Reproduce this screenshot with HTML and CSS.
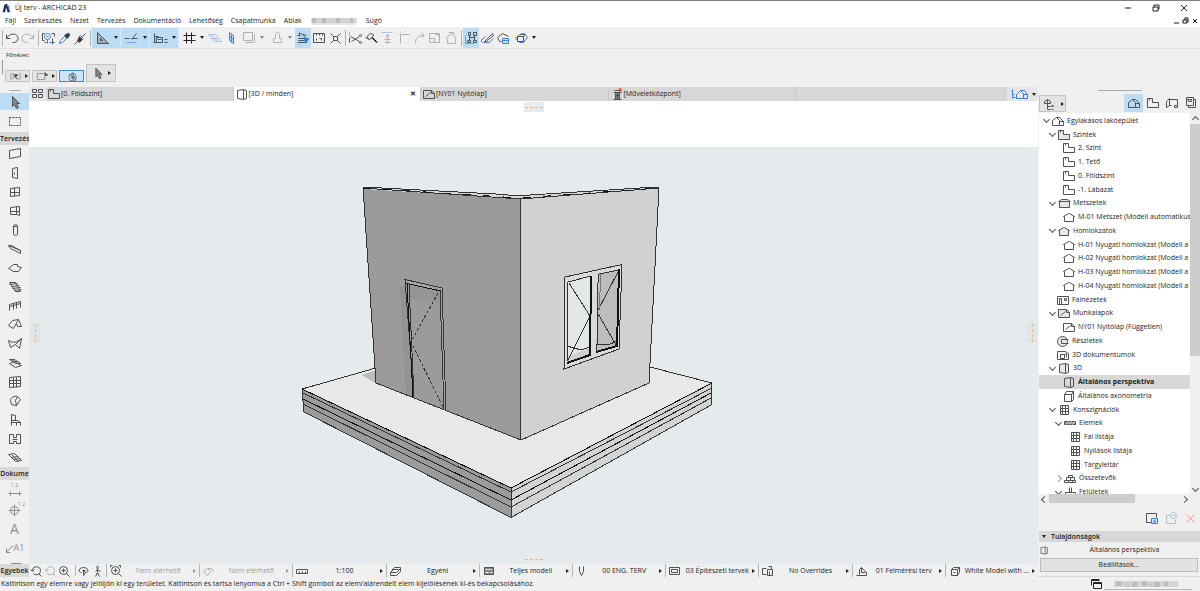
FILE: index.html
```html
<!DOCTYPE html>
<html lang="hu">
<head>
    <meta charset="UTF-8">
    <title>Új terv - ARCHICAD 23</title>
    <link rel="stylesheet" href="styles.css">
</head>
<body>
    <svg class="sprite" aria-hidden="true">
        <!-- toolbar -->
        <symbol id="undo" viewBox="0 0 16 16"><path d="M2 4v4h4M2 8c2-4 6-5 9-4 4 2 3 7-1 8H8"/></symbol>
        <symbol id="redo" viewBox="0 0 16 16"><path d="M13 4v4H9M13 8c-2-4-6-5-9-4-4 2-3 7 1 8h2"/></symbol>
        <symbol id="find" viewBox="0 0 16 16"><path d="M2 3h2M2 3v7h2M11 3h3v3M12 8v4h2M4 12h2"/><circle class="bl" cx="7" cy="6" r="3"/><path class="bl" d="M7 9v4M9 12h3v2M6 6h2"/></symbol>
        <symbol id="dropper" viewBox="0 0 16 16"><path class="bl" d="M3 13l1-3 4-4 2 2-4 4z"/><path class="dk" d="M8 5l3 3 2-3c1-1-1-3-2-2z"/></symbol>
        <symbol id="inject" viewBox="0 0 16 16"><path d="M2 14l5-5M8 5l3 3M10 6l3-3"/><path class="dk" d="M7 6l3 3-3 3-2-2z"/></symbol>
        <symbol id="triangle" viewBox="0 0 16 16"><path class="gl" d="M3 2v11h11zM6 8v2h2z"/></symbol>
        <symbol id="snap" viewBox="0 0 16 16"><path d="M1 8h5M8 9l5-6M8 8h6"/><path class="bl thin" d="M3 12h10"/></symbol>
        <symbol id="tracker" viewBox="0 0 16 16"><path d="M2 3v9M2 6h4M1 12h3M4 7h6v5H4zM5 9h4M12 9h3M12 12h3"/></symbol>
        <symbol id="hash" viewBox="0 0 16 16"><path class="bold" d="M5 2v11M10 2v11M2 5h12M2 10h12"/></symbol>
        <symbol id="plane" viewBox="0 0 16 16"><path class="bl" d="M1 4h7l6 7H7zM4 4l6 7M4 8h7"/></symbol>
        <symbol id="wallplane" viewBox="0 0 16 16"><path class="blf" d="M6 2l4 3v8l-4-3z"/><path class="bl" d="M6 6l4 3M8 4v8"/></symbol>
        <symbol id="layersq" viewBox="0 0 16 16"><path d="M2 2h9v8H2zM4 12h9V4"/></symbol>
        <symbol id="lock" viewBox="0 0 16 16"><path d="M4 12V8h2V4c0-3 4-3 4 0v4h2v4z"/></symbol>
        <symbol id="trace" viewBox="0 0 16 16"><path d="M4 2v3M2 5h3M5 3l6 2M3 8h7L8 5M2 12h9l-2-2H3"/><path class="bls" d="M10 7l4 1-3 4-3-2z"/></symbol>
        <symbol id="ruler" viewBox="0 0 16 16"><path d="M2 12V3h11v9zM5 3v2M8 3v2M11 3v2M5 8v2M8 8h2v2"/></symbol>
        <symbol id="explode" viewBox="0 0 16 16"><path d="M6 6h4v4H6zM3 3l3 3M13 3l-3 3M3 13l3-3M13 13l-3-3"/></symbol>
        <symbol id="scissors" viewBox="0 0 16 16"><path class="bl thin" d="M2 2v3"/><path d="M2 7v5M3 6l9 5M4 11l8-5"/><circle cx="13" cy="5" r="1"/><circle cx="13" cy="12" r="1"/></symbol>
        <symbol id="adjust" viewBox="0 0 16 16"><path class="bold" d="M8 7l5 5M9 7l5 5"/><path d="M4 7c0-3 3-5 6-3l-1 3-3 2zM2 7l4 2"/></symbol>
        <symbol id="split" viewBox="0 0 16 16"><path class="bl" d="M2 2h11"/><path d="M8 4v9M6 6l2-2 2 2M5 9h6M5 12h6"/></symbol>
        <symbol id="corner" viewBox="0 0 16 16"><path d="M5 13V4h9M2 4h1M5 1v1"/></symbol>
        <symbol id="fillet" viewBox="0 0 16 16"><path d="M4 13c0-6 3-8 8-8M10 2l3 3-3 2"/></symbol>
        <symbol id="resize" viewBox="0 0 16 16"><path d="M2 3h10v9H2zM2 8h5v4M8 4h3v2"/></symbol>
        <symbol id="roofcut" viewBox="0 0 16 16"><path d="M2 8l6-5 5 5M4 8v5h8V8M5 2h5v2"/></symbol>
        <symbol id="group" viewBox="0 0 16 16"><path d="M5 2h2v3H5zM10 2h3v3h-3zM6 5v5M11 5v5M4 10h3v2H4zM10 10h3v2h-3zM6 7h5"/><path class="bl thin" d="M2 5v8h9"/></symbol>
        <symbol id="pen" viewBox="0 0 16 16"><path d="M5 11l8-8 1 2-7 6z"/><path class="bl" d="M3 8c-3 3 0 5 3 4h4l4-4M6 6L3 9"/></symbol>
        <symbol id="hexlabel" viewBox="0 0 16 16"><path d="M6 11H4L2 7l5-4 6 3"/><path class="blf" d="M7 8h6v5H7z"/><path class="bl" d="M7 10h6"/></symbol>
        <symbol id="cube" viewBox="0 0 16 16"><path class="bl" d="M2 8l4-4 5-1 3 4-4 5-4 0z"/><path d="M4 6h6v5H4zM10 6l2-2M6 4h5"/></symbol>
        <!-- pointers -->
        <symbol id="arrow" viewBox="0 0 16 16"><path class="gf" d="M5 2v10l2-2 2 4 2-1-2-4h3z"/></symbol>
        <symbol id="marquee" viewBox="0 0 16 16"><path class="dash" d="M2 4h11v8H2z"/></symbol>
        <symbol id="marqset" viewBox="0 0 16 16"><path class="dash" d="M1 4h10v8H1z"/><path class="dk" d="M11 3l4 3-3 1z"/></symbol>
        <symbol id="suspend" viewBox="0 0 16 16"><path class="dash" d="M2 4v8M14 4v8"/><path d="M4 11l6-6M5 6l5 5M4 5h2M9 11h3"/><path class="dk" d="M7 5l4 1-3 3z"/></symbol>
        <symbol id="orbit" viewBox="0 0 16 16"><circle cx="8" cy="9" r="5"/><path d="M4 7l5-4v4l-3 2 3 3 3-2"/><path class="gf" d="M7 7l4 2-3 2z"/></symbol>
        <!-- toolbox -->
        <symbol id="t-wall" viewBox="0 0 16 16"><path d="M2 4l11-2v8L2 12z"/></symbol>
        <symbol id="t-door" viewBox="0 0 16 16"><path d="M5 3l5-1v11l-5-1zM7 7v2"/></symbol>
        <symbol id="t-window" viewBox="0 0 16 16"><path d="M3 4l9-1v8l-9 1zM7 3v9M3 8h9"/></symbol>
        <symbol id="t-corner" viewBox="0 0 16 16"><path d="M3 4l9-1v9l-3-1H3zM9 3v8M3 8h9"/></symbol>
        <symbol id="t-column" viewBox="0 0 16 16"><path d="M6 3c0-1 4-1 4 0v9c0 1-4 1-4 0zM6 4h4"/></symbol>
        <symbol id="t-beam" viewBox="0 0 16 16"><path d="M1 4l12 5v3L3 7zM1 4h3l9 5"/></symbol>
        <symbol id="t-slab" viewBox="0 0 16 16"><path d="M1 8l5-4h4v2l4 1-3 4H6z"/></symbol>
        <symbol id="t-stair" viewBox="0 0 16 16"><path d="M2 3h6l5 9H8zM2 5l8-1M4 7l8-1M5 9l8-1M7 11l7-1"/></symbol>
        <symbol id="t-rail" viewBox="0 0 16 16"><path d="M2 12V6l11-3v6M2 8l11-3M6 5v6M9 4v6"/></symbol>
        <symbol id="t-roof" viewBox="0 0 16 16"><path d="M1 8l4-5 6-1-5 9zM11 2l3 7h-4L9 6"/></symbol>
        <symbol id="t-shell" viewBox="0 0 16 16"><path d="M1 4c5 3 8 2 13-2l-2 10-4-4-5 3zM8 8l6-6"/></symbol>
        <symbol id="t-sky" viewBox="0 0 16 16"><path d="M2 4h5l6 4H8zM2 8l3-1M2 8l6 4 6-2-3-1M4 4l6 4M5 6h6"/></symbol>
        <symbol id="t-curtain" viewBox="0 0 16 16"><path d="M2 3l11-1v10L2 13zM6 3v10M9 3v10M2 6h11M2 9h11"/></symbol>
        <symbol id="t-morph" viewBox="0 0 16 16"><path d="M3 7c0-3 4-5 7-4l3 3-4 6-5-1zM10 3L8 7l1 5"/></symbol>
        <symbol id="t-object" viewBox="0 0 16 16"><path d="M4 2v11M4 8h6l3 2v3M4 10h5v3M4 2l4 1v5M9 10h4"/></symbol>
        <symbol id="t-zone" viewBox="0 0 16 16"><path d="M2 3h4v3h3V3h4v9h-4v-2H6v2H2zM5 8h5"/></symbol>
        <symbol id="t-mesh" viewBox="0 0 16 16"><path d="M1 4l6-1 7 7-6 1zM4 7l7-1M6 9l7-1M4 4l7 7"/></symbol>
        <symbol id="t-dim" viewBox="0 0 16 16"><path d="M1 10h13M3 8v4M12 8v4"/></symbol>
        <symbol id="t-level" viewBox="0 0 16 16"><circle cx="7" cy="8" r="4"/><path d="M1 8h12M7 2v12"/></symbol>
        <symbol id="t-label" viewBox="0 0 9 12"><path d="M1 10l5-6h2M1 6v4h4"/></symbol>
        <symbol id="t-fill" viewBox="0 0 16 16"><path d="M4 4h10l-3 8H2zM6 4L4 9M9 4L7 9M12 4l-2 5"/></symbol>
        <!-- views -->
        <symbol id="grid4" viewBox="0 0 14 14"><path d="M1 2h4v3H1zM7 2h4v3H7zM1 7h4v3H1zM7 7h4v3H7z"/></symbol>
        <symbol id="house" viewBox="0 0 14 14"><path d="M1 11V6l4-3 3 3v5zM5 3h3l4 4v4H8M8 7h4"/></symbol>
        <symbol id="story" viewBox="0 0 14 14"><path d="M1 2h5v4h6v5H1zM3 2v2"/></symbol>
        <symbol id="section" viewBox="0 0 14 14"><path d="M2 11V5h10v6zM1 5l3-2h6l3 2"/></symbol>
        <symbol id="elev" viewBox="0 0 14 14"><path d="M2 11V6H1l5-3h1l5 3h-1v5z"/></symbol>
        <symbol id="interior" viewBox="0 0 14 14"><path d="M1 3h11v8H1zM3 5v6M5 5v6M3 5h2M8 5h2v2H8z"/></symbol>
        <symbol id="sheet" viewBox="0 0 14 14"><path d="M1 3h8l3 3v5H1zM9 3v3h3M3 9l5-4"/></symbol>
        <symbol id="detail" viewBox="0 0 14 14"><circle cx="6" cy="7" r="5"/><path d="M5 5v4M5 5h7M5 9h7"/></symbol>
        <symbol id="doc3d" viewBox="0 0 14 14"><path d="M1 3h8l3 2v6H1zM4 6h4v4H4zM8 6l2-1v4"/></symbol>
        <symbol id="persp" viewBox="0 0 14 14"><path d="M2 3l6-1v10l-6-1zM8 2l3 1v8l-3 1"/></symbol>
        <symbol id="axo" viewBox="0 0 14 14"><path d="M2 5h7v7H2zM2 5l2-3h7L9 5M11 2v8l-2 2"/></symbol>
        <symbol id="table" viewBox="0 0 14 14"><path d="M3 2h8v9H3zM3 5h8M3 8h8M5 2v9M8 2v9"/></symbol>
        <symbol id="hatch" viewBox="0 0 14 14"><path class="gf" d="M1 5h11v3H1z"/><path class="wh" d="M3 8l2-3M6 8l2-3M9 8l2-3"/></symbol>
        <symbol id="bricks" viewBox="0 0 14 14"><path d="M1 9h11v2H1zM3 6h8v3H3zM5 4h4v2H5zM5 9v2M9 9v2M7 6v3"/></symbol>
        <symbol id="surface" viewBox="0 0 14 14"><path d="M6 2v5M8 2v5M2 7h10v3H2zM4 10v2M10 10v2"/></symbol>
        <symbol id="layout" viewBox="0 0 14 14"><path d="M1 11V5l3-3v7zM4 3h8v6M6 9H4M9 9h3v2H9z"/></symbol>
        <symbol id="publish" viewBox="0 0 14 14"><path d="M2 1h7v8H2zM4 9v2h7V3H9M4 3h3v2H4zM2 3h2"/></symbol>
        <symbol id="treemode" viewBox="0 0 14 14"><path d="M2 6V4l3-2 3 2v2H2M5 2v10h3M5 9h3M9 8h2M9 9h2M9 12h2"/></symbol>
        <symbol id="tower" viewBox="0 0 14 14"><path class="gf" d="M5 5h4v7H5z"/><path d="M3 12h8M3 5h8M5 8h4M4 3h6M7 5v7"/><path class="red" d="M8 1l3 0v3h-2z"/></symbol>
        <symbol id="housemenu" viewBox="0 0 20 14"><path d="M3 2v9M2 4h1M3 7h2M3 10h3M7 11V7l4-4 3 3v5zM11 3l4 0 3 4v4h-4M14 7h4"/></symbol>
        <symbol id="newview" viewBox="0 0 14 14"><path d="M6 11H1V2h10v4"/><path class="blf" d="M6 7h6v5H6z"/><path class="bls" d="M8 9h2v2H8z"/></symbol>
        <symbol id="newfolder" viewBox="0 0 14 14"><path d="M6 4H2v8h9V8"/><circle cx="9" cy="4" r="3"/><path d="M8 4h3"/></symbol>
        <symbol id="cross" viewBox="0 0 14 14"><path d="M3 3l8 8M11 3l-8 8"/></symbol>
        <!-- quick options -->
        <symbol id="zoomback" viewBox="0 0 14 14"><path d="M3 6c0-5 8-5 8 0s-6 5-7 3M1 5l2 2 2-2M9 9l3 3"/></symbol>
        <symbol id="zoomin" viewBox="0 0 14 14"><circle cx="6" cy="6" r="4"/><path d="M9 9l3 3M4 6h4M6 4v4"/></symbol>
        <symbol id="spin" viewBox="0 0 14 14"><path d="M4 8C0 8 1 3 6 3s6 5 2 5M5 6h3M6 6v5l2-3z"/></symbol>
        <symbol id="walk" viewBox="0 0 14 14"><circle cx="6" cy="3" r="1"/><path d="M6 5v3l-2 4M6 8l2 4M4 7l2-2 3 2"/></symbol>
        <symbol id="fit" viewBox="0 0 14 14"><circle cx="6" cy="6" r="4"/><path d="M4 6h4M6 4v4M1 3V1h2M9 1h2v2M9 9l3 3"/></symbol>
        <symbol id="turn" viewBox="0 0 14 14"><path d="M1 7l4-3 3 3-3 4zM5 4h4l2 3"/></symbol>
        <symbol id="scale" viewBox="0 0 14 14"><path d="M1 5h11v4H1zM4 7v2M7 7v2M10 7v2"/></symbol>
        <symbol id="layers" viewBox="0 0 14 14"><path d="M1 8h6l4-4M1 8l3-3M1 8v3h6l4-4V3H5L2 6M3 5h6"/></symbol>
        <symbol id="partial" viewBox="0 0 14 14"><path class="gf" d="M2 3h9v7H2z"/><path class="wh" d="M3 5h2M6 5h2M9 5h1M3 8h3M8 8h2"/></symbol>
        <symbol id="nib" viewBox="0 0 14 14"><path d="M4 2v5l2 4 2-4V2"/></symbol>
        <symbol id="frame" viewBox="0 0 14 14"><path d="M1 3h10v7H1zM3 5h6v3H3z"/></symbol>
        <symbol id="override" viewBox="0 0 14 14"><path d="M5 10H1V4h4M6 5h5v6H6zM7 2h3v3M8 7v4"/></symbol>
        <symbol id="reno" viewBox="0 0 14 14"><path d="M1 11h10V8L6 3 4 5v5M6 3v5h4"/></symbol>
        <symbol id="style3d" viewBox="0 0 14 14"><path d="M3 5h6v6H3zM3 5l2-2h6L9 5M11 3v5l-2 3M5 8h2"/></symbol>
        <symbol id="windows" viewBox="0 0 14 14"><path d="M2 8V2h8M4 5h8v6H4zM4 6h8M2 3h8"/></symbol>
    </svg>

    <header class="title-bar">
        <svg class="logo" viewBox="0 0 12 12"><path d="M2 11L4 2l3-1 4 10H8L6 5l-1 6z"/><path class="logo-light" d="M7 1l3 3 1 7-2-4z"/></svg>
        <h1>Új terv - ARCHICAD 23</h1>
        <div class="win-buttons">
            <button><svg viewBox="0 0 10 10"><path d="M2 5h6"/></svg></button>
            <button><svg viewBox="0 0 10 10"><path d="M2 4h5v4H2zM3 4V2h5v4H7"/></svg></button>
            <button><svg viewBox="0 0 10 10"><path d="M2 2l6 6M8 2L2 8"/></svg></button>
        </div>
    </header>

    <nav class="menu">
        <a href="#">Fájl</a>
        <a href="#">Szerkesztés</a>
        <a href="#">Nézet</a>
        <a href="#">Tervezés</a>
        <a href="#">Dokumentáció</a>
        <a href="#">Lehetőség</a>
        <a href="#">Csapatmunka</a>
        <a href="#">Ablak</a>
        <svg class="masked" viewBox="0 0 45 8"><path fill="#bbb" d="M0 1h5v5H0zM10 1h5v5h-5zM24 1h5v5h-5zM38 1h4v5h-4z"/><path fill="#d2d2d2" d="M5 1h5v5H5zM15 1h9v5h-9zM29 1h9v5h-9zM42 1h3v5h-3z"/><path fill="#e6e6e6" d="M0 6h45v2H0z"/></svg>
        <a href="#">Súgó</a>
        <div class="doc-buttons">
            <button><svg viewBox="0 0 8 8"><path d="M1 6h5"/></svg></button>
            <button><svg viewBox="0 0 8 8"><path d="M1 3h4v3H1zM3 3V1h3v4H5"/></svg></button>
            <button><svg viewBox="0 0 8 8"><path d="M2 2l4 4M6 2L2 6"/></svg></button>
        </div>
    </nav>

    <div class="toolbar">
        <i class="sep"></i>
        <button class="tool"><svg><use href="#undo"/></svg></button>
        <button class="tool off"><svg><use href="#redo"/></svg></button>
        <i class="sep"></i>
        <button class="tool"><svg><use href="#find"/></svg></button>
        <button class="tool"><svg><use href="#dropper"/></svg></button>
        <button class="tool"><svg><use href="#inject"/></svg></button>
        <i class="sep"></i>
        <div class="pair on"><button class="tool"><svg><use href="#triangle"/></svg></button><button class="drop"></button></div>
        <div class="pair on"><button class="tool"><svg><use href="#snap"/></svg></button><button class="drop"></button></div>
        <div class="pair on"><button class="tool"><svg><use href="#tracker"/></svg></button><button class="drop"></button></div>
        <div class="pair"><button class="tool"><svg><use href="#hash"/></svg></button><button class="drop"></button></div>
        <button class="tool off"><svg><use href="#plane"/></svg></button>
        <button class="tool"><svg><use href="#wallplane"/></svg></button>
        <div class="pair off"><button class="tool"><svg><use href="#layersq"/></svg></button><button class="drop"></button></div>
        <div class="pair off"><button class="tool"><svg><use href="#lock"/></svg></button><button class="drop"></button></div>
        <button class="tool on"><svg><use href="#trace"/></svg></button>
        <button class="tool"><svg><use href="#ruler"/></svg></button>
        <button class="tool"><svg><use href="#explode"/></svg></button>
        <i class="sep"></i>
        <button class="tool"><svg><use href="#scissors"/></svg></button>
        <button class="tool"><svg><use href="#adjust"/></svg></button>
        <button class="tool off"><svg><use href="#split"/></svg></button>
        <button class="tool off"><svg><use href="#corner"/></svg></button>
        <button class="tool off"><svg><use href="#fillet"/></svg></button>
        <button class="tool off"><svg><use href="#resize"/></svg></button>
        <button class="tool off"><svg><use href="#roofcut"/></svg></button>
        <i class="sep"></i>
        <button class="tool on"><svg><use href="#group"/></svg></button>
        <button class="tool"><svg><use href="#pen"/></svg></button>
        <button class="tool"><svg><use href="#hexlabel"/></svg></button>
        <div class="pair"><button class="tool"><svg><use href="#cube"/></svg></button><button class="drop"></button></div>
    </div>

    <div class="info-box">
        <span class="info-label">Főnézet:</span>
        <div class="info-row">
            <button class="mode"><svg><use href="#suspend"/></svg><i class="tri"></i></button>
            <button class="mode"><svg><use href="#marqset"/></svg><i class="tri"></i></button>
            <button class="mode active"><svg><use href="#orbit"/></svg></button>
            <button class="mode big"><svg><use href="#arrow"/></svg><i class="tri"></i></button>
        </div>
    </div>

    <main class="work">
        <aside class="toolbox">
            <div class="grip"></div>
            <button class="t-arrow on"><svg><use href="#arrow"/></svg></button>
            <button class="t-marquee"><svg><use href="#marquee"/></svg></button>
            <h2>Tervezés</h2>
            <div class="design">
                <button><svg><use href="#t-wall"/></svg></button>
                <button><svg><use href="#t-door"/></svg></button>
                <button><svg><use href="#t-window"/></svg></button>
                <button><svg><use href="#t-corner"/></svg></button>
                <button><svg><use href="#t-column"/></svg></button>
                <button><svg><use href="#t-beam"/></svg></button>
                <button><svg><use href="#t-slab"/></svg></button>
                <button><svg><use href="#t-stair"/></svg></button>
                <button><svg><use href="#t-rail"/></svg></button>
                <button><svg><use href="#t-roof"/></svg></button>
                <button><svg><use href="#t-shell"/></svg></button>
                <button><svg><use href="#t-sky"/></svg></button>
                <button><svg><use href="#t-curtain"/></svg></button>
                <button><svg><use href="#t-morph"/></svg></button>
                <button><svg><use href="#t-object"/></svg></button>
                <button><svg><use href="#t-zone"/></svg></button>
                <button><svg><use href="#t-mesh"/></svg></button>
            </div>
            <h2>Dokume</h2>
            <div class="document">
                <button class="dim"><span>1.2</span><svg><use href="#t-dim"/></svg></button>
                <button class="level"><span>1.2</span><svg><use href="#t-level"/></svg></button>
                <button class="letter">A</button>
                <button class="note"><svg><use href="#t-label"/></svg>A1</button>
                <button><svg><use href="#t-fill"/></svg></button>
            </div>
            <h2>Egyebek</h2>
        </aside>

        <section class="center">
            <div class="tabs">
                <button class="tab-grid"><svg><use href="#grid4"/></svg></button>
                <a href="#" class="tab"><svg><use href="#story"/></svg>[0. Földszint]</a>
                <a href="#" class="tab current"><svg><use href="#persp"/></svg>[3D / minden]<b>✕</b></a>
                <a href="#" class="tab"><svg><use href="#sheet"/></svg>[NY01 Nyitólap]</a>
                <a href="#" class="tab"><svg><use href="#tower"/></svg>[Műveletközpont]</a>
                <div class="tab-rest"></div>
                <button class="tab-menu"><svg><use href="#housemenu"/></svg><i class="down"></i></button>
            </div>

            <div class="view">
                <svg class="model" viewBox="29 101 1009 463">
                    <!-- slab -->
                    <path fill="#9b9b9b" d="M302 389L511 488V517L304 412z"/>
                    <path fill="#d3d3d3" d="M511 488L712 383L711 405L511 517z"/>
                    <path fill="#e8e8e8" d="M302 389L376 368L650 367L712 383L511 488z"/>
                    <path fill="#bcbcbc" d="M361 375L376 370V383z"/>
                    <path class="edge" d="M376 368L302 389L511 488L712 383L650 367M302 389L304 412L511 517.500L711 405L712 383M511 488V517"/>
                    <path class="edge" d="M303 393L511 492L712 388M303 404L511 507L711 398"/>
                    <path class="edge heavy" d="M303 399L511 500L711 393M302 389L511 488L712 383"/>
                    <!-- walls -->
                    <path fill="#9b9b9b" d="M363 188L520 198L521 440L376 383z"/>
                    <path fill="#d1d1d1" d="M520 198L659 188L649 383L521 440z"/>
                    <path fill="#d8d8d8" d="M363 187L505 195H530L659 187V189L520 199L363 189z"/>
                    <path class="edge" d="M363 187L376 383L521 440L649 383L659 188M520 199L521 440M363 187L505 194.500Q520 197 530 195L640 188L659 187.500"/>
                    <path class="edge" d="M363 188L520 199L659 188"/>
                    <path class="edge heavy" stroke-dasharray="8 12" d="M363 188L520 198L659 188"/>
                    <!-- door -->
                    <path fill="#939393" d="M400 287L405 285L414 397L406 394z"/>
                    <path fill="#a5a5a5" d="M405 280L442 288L446 411L443 410L439 292L408 284z"/>
                    <path fill="#959595" d="M409 285L440 291V304L410 299z"/>
                    <path class="edge" d="M414 397L405 279.500L442 288L446 411M440 291L444 410M409 285L414 397"/>
                    <path class="edge heavy" d="M441 291L407 283.500L413 397"/>
                    <path class="edge" stroke-dasharray="3 2" d="M438 293L411 342L443 407"/>
                    <!-- window -->
                    <path fill="#dadada" class="edge" d="M565 277L622 264.500L619 349L564 369z"/>
                    <path fill="#e3e7e8" d="M568 282L592 276L590 355L567 363z"/>
                    <path fill="#bdbdbd" d="M599 274L619 269L617 346L596 352z"/>
                    <path fill="#cfcfcf" d="M567 357L590 348V355L567 363z"/>
                    <path class="edge" d="M591 276L568 282L567 363M599 274L619 270M599 274L598 283L597 345L596 352M567 346L581 350L590 347M596 344L608 345L617 341"/>
                    <path class="edge" d="M569 283L590 316L568 360M618 272L597 312L616 345"/>
                    <path class="edge frame" d="M591 276L590 355L567 363M619 269L617 346L596 352"/>
                    <path class="edge thin-gray" d="M601 274L599 310"/>
                </svg>
                <i class="handle top"></i>
                <i class="handle left"></i>
                <i class="handle right"></i>
                <i class="handle bottom"></i>
            </div>

            <div class="quick">
                <div class="zooms">
                    <button><svg><use href="#zoomback"/></svg></button>
                    <button class="off"><svg><use href="#zoomback"/></svg></button>
                    <button><svg><use href="#zoomin"/></svg></button>
                    <i class="sep"></i>
                    <button><svg><use href="#spin"/></svg></button>
                    <button><svg><use href="#walk"/></svg></button>
                </div>
                <button class="option off first"><svg><use href="#fit"/></svg><span>Nem elérhető</span><i class="tri"></i></button>
                <button class="option off"><svg><use href="#turn"/></svg><span>Nem elérhető</span><i class="tri"></i></button>
                <button class="option"><svg><use href="#scale"/></svg><span>1:100</span><i class="tri"></i></button>
                <button class="option"><svg><use href="#layers"/></svg><span>Egyéni</span><i class="tri"></i></button>
                <button class="option"><svg><use href="#partial"/></svg><span>Teljes modell</span><i class="tri"></i></button>
                <button class="option"><svg><use href="#nib"/></svg><span>00 ENG. TERV</span><i class="tri"></i></button>
                <button class="option"><svg><use href="#frame"/></svg><span>03 Építészeti tervek</span><i class="tri"></i></button>
                <button class="option"><svg><use href="#override"/></svg><span>No Overrides</span><i class="tri"></i></button>
                <button class="option"><svg><use href="#reno"/></svg><span>01 Felmérési terv</span><i class="tri"></i></button>
                <button class="option"><svg><use href="#style3d"/></svg><span>White Model with ...</span><i class="tri"></i></button>
            </div>
        </section>

        <aside class="navigator">
            <div class="nav-head">
                <button class="nav-mode"><svg><use href="#treemode"/></svg><i class="tri"></i></button>
                <i class="nav-grip"></i>
                <button class="map on"><svg><use href="#house"/></svg></button>
                <button class="map"><svg><use href="#story"/></svg></button>
                <button class="map"><svg><use href="#layout"/></svg></button>
                <button class="map"><svg><use href="#publish"/></svg></button>
            </div>
            <div class="nav-body">
                <div class="tree-box">
                    <ul class="tree">
                        <li class="l0 open"><svg><use href="#house"/></svg>Egylakásos lakóépület</li>
                        <li class="l1 open folder"><svg><use href="#story"/></svg>Szintek</li>
                        <li class="l2"><svg><use href="#story"/></svg>2. Szint</li>
                        <li class="l2"><svg><use href="#story"/></svg>1. Tető</li>
                        <li class="l2"><svg><use href="#story"/></svg>0. Földszint</li>
                        <li class="l2"><svg><use href="#story"/></svg>-1. Lábazat</li>
                        <li class="l1 open folder"><svg><use href="#section"/></svg>Metszetek</li>
                        <li class="l2"><svg><use href="#elev"/></svg>M-01 Metszet (Modell automatikus</li>
                        <li class="l1 open folder"><svg><use href="#elev"/></svg>Homlokzatok</li>
                        <li class="l2"><svg><use href="#elev"/></svg>H-01 Nyugati homlokzat (Modell a</li>
                        <li class="l2"><svg><use href="#elev"/></svg>H-02 Nyugati homlokzat (Modell a</li>
                        <li class="l2"><svg><use href="#elev"/></svg>H-03 Nyugati homlokzat (Modell a</li>
                        <li class="l2"><svg><use href="#elev"/></svg>H-04 Nyugati homlokzat (Modell a</li>
                        <li class="l1"><svg><use href="#interior"/></svg>Falnézetek</li>
                        <li class="l1 open folder"><svg><use href="#sheet"/></svg>Munkalapok</li>
                        <li class="l2"><svg><use href="#sheet"/></svg>NY01 Nyitólap (Független)</li>
                        <li class="l1 folder"><svg><use href="#detail"/></svg>Részletek</li>
                        <li class="l1"><svg><use href="#doc3d"/></svg>3D dokumentumok</li>
                        <li class="l1 open folder"><svg><use href="#persp"/></svg>3D</li>
                        <li class="l2 selected"><svg><use href="#persp"/></svg>Általános perspektíva</li>
                        <li class="l2"><svg><use href="#axo"/></svg>Általános axonometria</li>
                        <li class="l1 open"><svg><use href="#table"/></svg>Konszignációk</li>
                        <li class="l2 open"><svg><use href="#hatch"/></svg>Elemek</li>
                        <li class="l3"><svg><use href="#table"/></svg>Fal listája</li>
                        <li class="l3"><svg><use href="#table"/></svg>Nyílások listája</li>
                        <li class="l3"><svg><use href="#table"/></svg>Tárgyleltár</li>
                        <li class="l2 closed"><svg><use href="#bricks"/></svg>Összetevők</li>
                        <li class="l2 open"><svg><use href="#surface"/></svg>Felületek</li>
                    </ul>
                </div>
                <div class="vscroll"><i class="chev up"></i><div class="thumb"></div><i class="chev"></i></div>
            </div>
            <div class="hscroll"><i class="chev prev"></i><div class="thumb"></div><i class="chev next"></i></div>
            <div class="nav-actions">
                <button><svg><use href="#newview"/></svg></button>
                <button class="pale"><svg><use href="#newfolder"/></svg></button>
                <button class="delete"><svg><use href="#cross"/></svg></button>
            </div>
            <h2 class="props-title"><i class="down"></i>Tulajdonságok</h2>
            <div class="props"><svg><use href="#persp"/></svg><span>Általános perspektíva</span></div>
            <button class="settings">Beállítások...</button>
        </aside>
    </main>

    <footer class="status">
        <p>Kattintson egy elemre vagy jelöljön ki egy területet. Kattintson és tartsa lenyomva a Ctrl + Shift gombot az elem/alárendelt elem kijelölésének ki-és bekapcsolásához.</p>
        <svg class="status-icon"><use href="#windows"/></svg>
        <div class="status-field">
            <svg viewBox="0 0 64 6"><path fill="#d5d5d5" d="M0 0h64v6H0z"/><path fill="#bdbdbd" d="M2 0h6v5H2zM18 1h5v5h-5zM28 0h5v5h-5zM40 1h6v5h-6zM50 1h4v4h-4z"/><path fill="#c9c9c9" d="M10 2h6v4h-6zM34 2h5v4h-5z"/></svg>
        </div>
    </footer>
</body>
</html>
```
FILE: styles.css
```css
*{
    box-sizing: border-box;
    margin: 0;
    padding: 0;
    list-style: none;
}
body{
    display: flex;
    flex-direction: column;
    height: 100vh;
    overflow: hidden;
    border-top: 1px solid #7f7f7f;
    background: #f0f0f0;
    color: #1c1c1c;
    font: 7px/10px "Open Sans", "Noto Sans", sans-serif;
}
button{
    display: flex;
    align-items: center;
    justify-content: center;
    border: 0;
    background: none;
    color: inherit;
    font: inherit;
}
a{
    color: inherit;
    text-decoration: none;
}
svg{
    flex: none;
    width: 16px;
    height: 16px;
    fill: none;
    stroke: #4c5257;
    stroke-width: 1;
}
/* strokes on whole pixels */
use{
    transform: translate(.5px, .5px);
}
.sprite{
    position: absolute;
    width: 0;
    height: 0;
}
.bl{ stroke: #3f7fd0; }
.blf{ stroke: #3f7fd0; fill: #cfe0f7; }
.bls{ stroke: none; fill: #2f7ee0; }
.dk{ fill: #34393e; }
.gf{ fill: #858585; }
.gl{ fill: #9fb0bf; }
.wh{ stroke: #fff; }
.red{ fill: #e0452f; stroke: none; }
.thin{ opacity: .6; }
.bold{ stroke: #222; }
.dash{ stroke-dasharray: 2 1; }
.off svg{ opacity: .4; }
.on{ background: #bbdcf4; }

/* small triangles */
.tri{
    flex: none;
    border: 2px solid transparent;
    border-left: 3px solid #222;
    border-right: 0;
}
.down,
.drop::after{
    content: "";
    border: 2px solid transparent;
    border-top: 3px solid #222;
    border-bottom: 0;
}
.off .tri{ border-left-color: #999; }

/* title and menu */
.title-bar{
    display: flex;
    align-items: center;
    height: 14px;
    background: #fff;
}
.logo{
    width: 10px;
    height: 10px;
    margin: 0 4px 0 1px;
    stroke: none;
    fill: #1d3160;
}
.logo-light{ fill: #6d83ad; }
.title-bar h1{
    font-size: 7px;
    font-weight: 400;
}
.win-buttons{
    display: flex;
    gap: 18px;
    margin-left: auto;
    padding-right: 11px;
}
.win-buttons svg{
    width: 10px;
    height: 10px;
    stroke: #222;
}
.menu{
    display: flex;
    align-items: center;
    gap: 8px;
    height: 12px;
    padding-left: 5px;
    background: #fff;
}
.masked{
    width: 48px;
    height: 8px;
    stroke: none;
}
.doc-buttons{
    display: flex;
    gap: 1px;
    margin-left: auto;
    padding-right: 1px;
}
.doc-buttons svg{
    width: 8px;
    height: 8px;
    stroke: #111;
}

/* toolbar */
.toolbar{
    display: flex;
    align-items: center;
    height: 22px;
    border-bottom: 1px solid #e2e2e2;
}
.sep{
    width: 1px;
    height: 16px;
    margin: 0 1px 0 2px;
    background: #b4b4b4;
}
.tool{
    width: 16px;
    height: 20px;
}
.pair{
    display: flex;
    margin-left: 2px;
}
.drop{
    width: 10px;
}
.off .drop{ opacity: .5; }
.pair.on{
    margin: 0;
    border-right: 1px solid #d4e9f8;
}
.pair.on .tool{ width: 19px; }
.pair.on .drop{ width: 9px; }

/* info box */
.info-box{
    height: 38px;
    padding-top: 1px;
}
.info-label{
    display: block;
    padding-left: 6px;
    font-size: 6px;
}
.info-row{
    display: flex;
    align-items: flex-end;
    gap: 2px;
    height: 22px;
    margin-left: 2px;
    padding-left: 3px;
    background: linear-gradient(#999, #999) 0 0 / 1px 14px no-repeat;
}
.mode{
    width: 25px;
    height: 12px;
    border: 1px solid #c3c3c3;
    background: #e3e3e3;
    gap: 3px;
}
.mode svg{
    width: 14px;
    height: 12px;
}
.mode.active{
    border-color: #3c87cc;
    background: #cbe4f8;
}
.mode.big{
    width: 30px;
    height: 18px;
}
.mode.big svg{ height: 14px; }

/* main area */
.work{
    display: grid;
    grid-template-columns: 29px 1fr 162px;
    grid-template-rows: minmax(0, 1fr);
    flex: 1;
    min-height: 0;
}
.toolbox{
    display: flex;
    flex-direction: column;
    min-height: 0;
}
.toolbox > *{ flex: none; }
.grip{
    width: 12px;
    height: 3px;
    margin: 3px auto 0;
    border-top: 1px solid #aaa;
}
.t-arrow{ height: 17px; }
.t-marquee{ height: 22px; }
.toolbox h2{
    height: 13px;
    overflow: hidden;
    background: #d9d9d9;
    font-size: 7px;
    font-weight: 600;
    line-height: 13px;
    text-align: center;
}
.design{
    display: grid;
    grid-auto-rows: 1fr;
    justify-content: center;
    height: 322px;
}
.toolbox .document{
    flex: 1;
    min-height: 0;
    overflow: hidden;
    padding-top: 1px;
    color: #8e8e8e;
}
.document button{
    position: relative;
    width: 100%;
    height: 19px;
}
.document svg{ opacity: .6; }
.document span{
    position: absolute;
    top: 0;
    left: 11px;
    font-size: 5px;
    line-height: 8px;
}
.document .level span{ left: 18px; }
.document .letter{ font-size: 14px; }
.document .note{ font-size: 9px; }
.note svg{
    width: 9px;
    height: 12px;
}

.center{
    display: flex;
    flex-direction: column;
    min-width: 0;
}
.tabs{
    display: flex;
    height: 14px;
    background: #e6e6e6;
}
.tab-grid{ width: 17px; }
.tabs svg{
    width: 14px;
    height: 14px;
}
.tab{
    display: flex;
    flex: 1;
    align-items: center;
    border-right: 1px solid #c9c9c9;
    background: #d7d7d7;
    padding-left: 1px;
}
.tab.current{ background: #fff; }
.tab b{
    margin-left: auto;
    padding-right: 4px;
    font-size: 7px;
}
.tab-rest{
    width: 211px;
    background: #d7d7d7;
}
.tab-menu{
    width: 31px;
    gap: 3px;
}
.tabs .tab-menu svg{
    width: 20px;
    stroke: #3f7fe0;
}

/* 3D view */
.view{
    position: relative;
    flex: 1;
    min-height: 0;
    background: linear-gradient(#fff 46px, #e5ebed 46px);
}
.model{
    display: block;
    width: 100%;
    height: 100%;
    stroke: none;
    shape-rendering: crispEdges;
}
.edge{
    stroke: #333;
    stroke-width: 1;
}
.heavy{ stroke: #111; }
.frame{ stroke: #111; stroke-width: 2; }
.thin-gray{ stroke: #777; }
.handle{
    position: absolute;
    width: 20px;
    height: 10px;
    background: repeating-linear-gradient(90deg, #f0b48a 0 3px, transparent 3px 5px) 1px 5px / 18px 1px no-repeat #e9e9e9;
}
.handle.top{ top: 1px; left: calc(50% - 10px); }
.handle.bottom{ bottom: 0; left: calc(50% - 10px); }
.handle.left,
.handle.right{
    top: calc(50% - 10px);
    width: 10px;
    height: 20px;
    background: repeating-linear-gradient(#f0b48a 0 3px, transparent 3px 5px) 5px 1px / 1px 18px no-repeat #e4e4e4;
}
.handle.left{ left: 1px; }
.handle.right{ right: 1px; }

/* quick options */
.quick{
    display: flex;
    height: 13px;
}
.quick svg{
    width: 14px;
    height: 14px;
    margin-bottom: -1px;
}
.zooms{
    display: flex;
    align-items: center;
    width: 77px;
}
.zooms button{ width: 14px; }
.quick .sep{
    height: 11px;
    margin: 0 1px 0 4px;
}
.option{
    flex: 1 1 0;
    min-width: 0;
    padding: 0 3px 0 2px;
    border-left: 1px solid #b4b4b4;
}
.option span{
    flex: 1;
    overflow: hidden;
    text-align: center;
    white-space: nowrap;
}
.option.off{ color: #9a9a9a; }
.option.first svg{ opacity: 1; }

/* navigator */
.navigator{
    display: flex;
    flex-direction: column;
    min-width: 0;
    padding-left: 1px;
    border-bottom: 1px solid #dadada;
}
.navigator > *{ flex: none; }
.nav-head{
    position: relative;
    display: flex;
    align-items: flex-end;
    height: 26px;
    padding-bottom: 1px;
}
.nav-mode{
    width: 27px;
    height: 17px;
    margin-right: auto;
    border: 1px solid #c3c3c3;
    background: #e3e3e3;
    gap: 5px;
}
.nav-head .nav-grip{
    position: absolute;
    top: 3px;
    left: 59px;
    width: 44px;
    height: 1px;
    background: #aaa;
}
.navigator svg{
    width: 14px;
    height: 14px;
}
.map{
    width: 19px;
    height: 18px;
}
.navigator .nav-body{
    display: flex;
    flex: 1;
    min-height: 0;
}
.tree-box{
    flex: 1;
    min-width: 0;
    overflow: hidden;
    background: #fff;
    padding-top: 1px;
}
.tree{
    display: grid;
    grid-auto-rows: minmax(0, 1fr);
    height: 385px;
}
.tree li{
    display: flex;
    align-items: center;
    min-height: 0;
    white-space: nowrap;
}
.tree svg{
    margin: 0 2px 0 11px;
}
.l1{ padding-left: 6px; }
.l2{ padding-left: 12px; }
.l3{ padding-left: 18px; }
.folder svg{ fill: #e6e6e6; }
.tree .selected{
    background: #d8d8d8;
    font-weight: 700;
}
.open::before,
.closed::before,
.chev::before{
    content: "";
    flex: none;
    width: 4px;
    height: 4px;
    margin: 0 -9px 2px 5px;
    border: solid #555;
    border-width: 0 1px 1px 0;
    transform: rotate(45deg);
}
.closed::before{
    margin-bottom: 0;
    transform: rotate(-45deg);
    border-color: #999;
}
.chev{
    display: flex;
    align-items: center;
    justify-content: center;
    width: 10px;
    height: 10px;
}
.chev::before{ margin: 0; }
.chev.up::before{ transform: rotate(225deg); }
.chev.prev::before{ transform: rotate(135deg); }
.chev.next::before{ transform: rotate(-45deg); }
.vscroll{
    display: flex;
    flex-direction: column;
    width: 10px;
    padding: 1px 0;
}
.vscroll .thumb{
    height: 232px;
    margin-bottom: auto;
    background: #cdcdcd;
}
.hscroll{
    display: flex;
    height: 10px;
    padding-right: 11px;
}
.hscroll .thumb{
    width: 86px;
    height: 9px;
    margin-right: auto;
    background: #cdcdcd;
}
.nav-actions{
    display: flex;
    align-items: center;
    justify-content: flex-end;
    gap: 5px;
    height: 27px;
    padding-right: 3px;
}
.navigator .pale svg{ stroke: #a9bfe0; }
.navigator .delete svg{ stroke: #ee9c84; }
.props-title{
    display: flex;
    align-items: center;
    gap: 5px;
    height: 11px;
    padding-left: 3px;
    background: #d7d7d7;
    font-size: 7px;
    font-weight: 600;
}
.props{
    display: flex;
    align-items: center;
    height: 16px;
}
.navigator .props svg{
    width: 10px;
    height: 10px;
}
.props span{
    flex: 1;
    text-align: center;
}
.settings{
    height: 14px;
    margin: 0 2px 4px 1px;
    border: 1px solid #bcbcbc;
    background: #e2e2e2;
}

/* status bar */
.status{
    display: flex;
    flex: none;
    align-items: center;
    height: 14px;
    padding: 0 8px 0 1px;
}
.status-icon{
    width: 14px;
    height: 14px;
    margin: 0 1px 0 auto;
    stroke: #222;
}
.status-field{
    width: 88px;
    height: 11px;
    padding: 2px 10px;
    border-bottom: 1px solid #b5b5b5;
}
.status-field svg{
    display: block;
    width: 64px;
    height: 6px;
    stroke: none;
}
```
